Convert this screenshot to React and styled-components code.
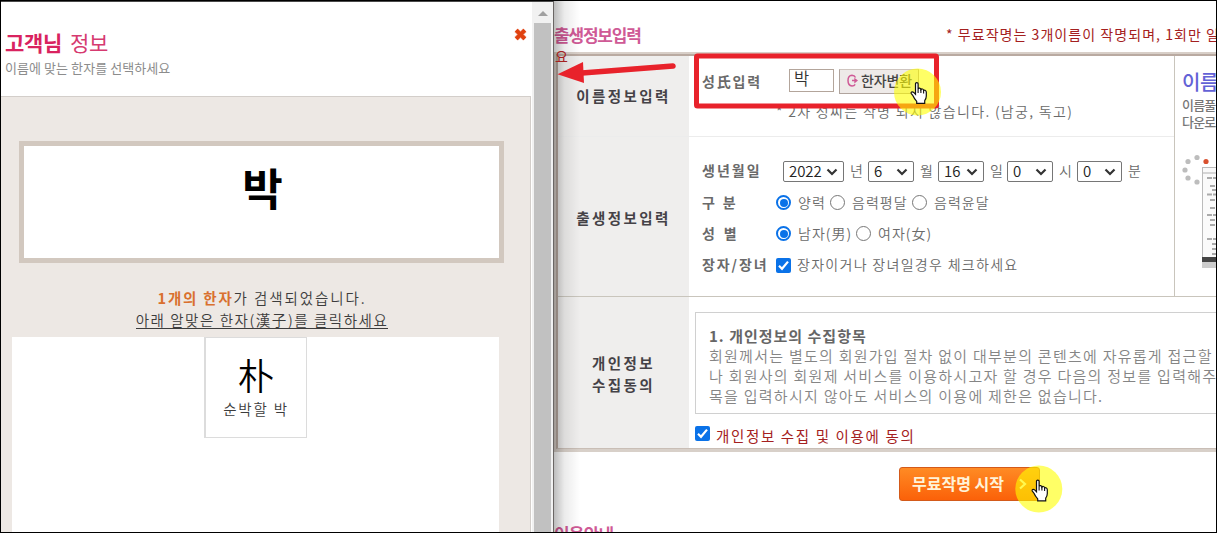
import React from 'react';
import styled, { createGlobalStyle } from 'styled-components';

const GlobalStyle = createGlobalStyle`
  * {
    box-sizing: border-box;
  }
  body {
    margin: 0;
    overflow: hidden;
    font-family: 'Noto Sans CJK KR', 'Liberation Sans', sans-serif;
    font-size: 14px;
    color: #6a6a6a;
  }
  p, h1, h2, h3 {
    margin: 0;
  }
`;

const Screen = styled.div`
  position: relative;
  display: flex;
  width: 1217px;
  height: 533px;
  overflow: hidden;
  border: 1px solid #000;
  background: #fff;
`;

const Line = styled.span`
  display: block;
  flex: none;
  width: ${p => (p.$w ? `${p.$w}px` : 'auto')};
  margin-bottom: ${p => (p.$up || 0) * 2}px;
  padding-top: ${p => p.$top || 0}px;
  font-size: ${p => p.$size || 14}px;
  font-weight: ${p => p.$weight || 350};
  letter-spacing: ${p => p.$ls || 0}px;
  line-height: ${p => p.$lh || 20}px;
  color: ${p => p.$color || 'inherit'};
  white-space: pre;
`;

/* popup */
const Popup = styled.section`
  display: flex;
  flex: none;
  width: 553px;
  height: 531px;
  border-top: 1px solid #4a4a4a;
  border-right: 1px solid #6a6664;
`;

const PopupPage = styled.div`
  display: flex;
  flex-direction: column;
  width: 531px;
`;

const PopupHeader = styled.header`
  display: flex;
  justify-content: space-between;
  height: 94px;
  padding: 26px 5px 0 4px;
`;

const PopupTitle = styled.h1`
  display: flex;
  gap: 8px;
  height: 30px;
`;

const CloseIcon = styled.svg`
  width: 13px;
  height: 13px;
`;

const PopupBody = styled.div`
  display: flex;
  flex-direction: column;
  flex: 1;
  width: 530px;
  padding-top: 44px;
  border-top: 1px solid #d3ceca;
  border-right: 1px solid #d3ceca;
  background: #ede8e4;
`;

const NameBox = styled.div`
  display: flex;
  flex: none;
  justify-content: center;
  width: 485px;
  height: 122px;
  margin-left: 18px;
  padding: 6px 0 0 2px;
  border: 5px solid #d2c8bf;
  background: #fff;
`;

const Result = styled.div`
  display: flex;
  flex-direction: column;
  align-items: center;
  width: 522px;
  height: 74px;
  padding-top: 25px;
  color: #3c3c3c;
`;

const ResultRow = styled.div`
  display: flex;
  height: 22px;
  border-bottom: ${p => (p.$underline ? '1px solid #3c3c3c' : '0')};
  ${p => p.$underline && 'height: 19px;'}
`;

const HanjaList = styled.div`
  display: flex;
  flex: 1;
  justify-content: center;
  width: 487px;
  margin-left: 11px;
  background: #fff;
`;

const HanjaCell = styled.div`
  display: flex;
  flex-direction: column;
  align-items: center;
  width: 103px;
  height: 101px;
  padding-top: 12px;
  border: 1px solid #dcdcdc;
  border-left-width: 2px;
  color: #3c3c3c;
`;

const Scrollbar = styled.div`
  display: flex;
  flex-direction: column;
  align-items: center;
  width: 21px;
  padding-top: 9px;
  background: #f1f1f1;
`;

const ScrollArrow = styled.div`
  border: 5px solid transparent;
  border-top: 0;
  border-bottom-color: #a0a0a0;
`;

const ScrollThumb = styled.div`
  flex: 1;
  width: 17px;
  margin-top: 7px;
  background: #c1c1c1;
`;

/* form page */
const Page = styled.main`
  position: relative;
  display: flex;
  flex-direction: column;
  flex: none;
  width: 662px;
  height: 531px;
  overflow: hidden;
`;

const PageHeader = styled.header`
  display: flex;
  flex: none;
  justify-content: space-between;
  height: 51px;
`;

const Table = styled.div`
  flex: none;
  width: 720px;
  height: 400px;
  border: 2px solid #d8cfc8;
  border-bottom: 3px solid #d8d0c9;
`;

const TableInner = styled.div`
  height: 395px;
  border: 2px solid #b9aaa1;
  border-bottom: 1px solid #c9beb6;
`;

const Columns = styled.div`
  display: flex;
  height: 241px;
  border-bottom: 1px solid #c9c5bc;
`;

const Rows = styled.div`
  width: 617px;
  border-right: 1px solid #c9c5bc;
`;

const Row = styled.div`
  display: flex;
  height: ${p => p.$h}px;
  border-bottom: ${p => (p.$divider ? '1px solid #ececec' : '0')};
`;

const RowTitle = styled.h3`
  display: flex;
  flex: none;
  flex-direction: column;
  justify-content: center;
  align-items: center;
  width: 131px;
  padding-top: ${p => p.$top || 0}px;
  background: #efeeed;
  color: #454247;
`;

const Fields = styled.div`
  display: flex;
  flex-direction: column;
  flex: 1;
  padding: ${p => p.$pad};
`;

const Field = styled.div`
  display: flex;
  align-items: center;
  height: ${p => p.$h || 31}px;
`;

const NameInput = styled.div`
  width: 45px;
  height: 23px;
  margin-bottom: 2px;
  padding-left: 4px;
  border: 1px solid #b3a59b;
  color: #333;
`;

const ConvertButton = styled.div`
  display: flex;
  align-items: center;
  width: 80px;
  height: 25px;
  margin-left: 5px;
  padding-left: 6px;
  border: 1px solid #b0a49d;
  border-top-color: #cfc5bf;
  background: #eeeae8;
`;

const SelectBox = styled.div`
  display: flex;
  flex: none;
  align-items: center;
  justify-content: space-between;
  width: ${p => p.$w}px;
  height: 21px;
  margin-right: 6px;
  padding: 0 5px;
  border: 1px solid #767676;
  border-radius: 2px;
  color: #222;
`;

const Radio = styled.span`
  flex: none;
  width: 15px;
  height: 15px;
  margin-right: 7px;
  border: ${p => (p.$on ? '2px solid #0a72e8' : '1.5px solid #777')};
  border-radius: 50%;
  background: ${p => (p.$on ? '#0a72e8' : '#fff')};
  background-clip: content-box;
  padding: ${p => (p.$on ? '1.5px' : '0')};
`;

const Check = styled.svg`
  flex: none;
  width: 15px;
  height: 15px;
  margin: ${p => p.$top || 2}px 6px 0 0;
`;

const Side = styled.aside`
  display: flex;
  flex-direction: column;
  padding: 13px 0 0 7px;
`;

const Terms = styled.div`
  flex: none;
  width: 560px;
  height: 102px;
  padding: 13px 13px 0;
  border: 1px solid #d0d0d0;
`;

const StartButton = styled.div`
  display: flex;
  flex: none;
  align-items: center;
  width: 141px;
  height: 34px;
  margin: 15px 0 0 345px;
  padding-left: 12px;
  border: 1px solid #d35a1a;
  border-radius: 3px;
  background: linear-gradient(#ff8b24, #fb6109);
`;

const Footer = styled.footer`
  padding-top: 18px;
`;

const Shadow = styled.div`
  position: absolute;
  top: 0;
  left: 0;
  width: 26px;
  height: 531px;
  background: linear-gradient(90deg, rgba(0, 0, 0, 0.26), rgba(0, 0, 0, 0.08) 40%, transparent);
`;

const WrappedChar = styled.div`
  position: absolute;
  top: 45px;
  left: 1px;
`;

/* marks drawn over the page */
const Marks = styled.svg`
  position: absolute;
  top: -1px;
  left: -1px;
  width: 1217px;
  height: 533px;
`;

const Chevron = () => (
  <svg width="12" height="8" viewBox="0 0 12 8">
    <path d="M1.5 1.5 L6 6 L10.5 1.5" fill="none" stroke="#333" strokeWidth="2.2" />
  </svg>
);

const Select = ({ value, w }) => (
  <SelectBox $w={w}>
    <Line $size={15} $up={1} $ls={-0.1}>{value}</Line>
    <Chevron />
  </SelectBox>
);

const Checkbox = ({ top }) => (
  <Check $top={top} viewBox="0 0 15 15">
    <rect width="15" height="15" rx="2" fill="#0a72e8" />
    <path d="M3 7.8 L6 10.8 L12 3.6" fill="none" stroke="#fff" strokeWidth="2.2" />
  </Check>
);

const Hand = ({ x, y }) => (
  <g transform={`translate(${x} ${y})`}>
    <path
      d="M5 1.8 Q5 .6 6.3 .6 Q7.6 .6 7.6 1.8 V7 Q8 6 9.2 6.2 Q10.3 6.4 10.4 7.6 Q11 6.7 12 7 Q13.1 7.3 13.1 8.6 Q14 7.9 14.9 8.5 Q15.8 9 15.8 10.2 V14 Q15.8 16.5 14.2 18.6 V21.4 H6.2 V19.4 Q3.6 16.5 2.5 13.8 Q1.6 12.4 .8 11.6 Q.2 10.6 1.1 10 Q2.2 9.4 3.4 10.6 L5 12.2 Z"
      fill="#fff"
      stroke="#111"
      strokeWidth="1.2"
    />
    <path d="M7.6 7 V11 M10.4 7.6 V11 M13.1 8.6 V11.4" stroke="#111" strokeWidth="1.1" />
  </g>
);

const selects = [
  { value: '2022', w: 61, unit: '년', unitW: 18 },
  { value: '6', w: 46, unit: '월', unitW: 18 },
  { value: '16', w: 46, unit: '일', unitW: 17 },
  { value: '0', w: 46, unit: '시', unitW: 18 },
  { value: '0', w: 45, unit: '분', unitW: 18 }
];

const terms = [
  '회원께서는 별도의 회원가입 절차 없이 대부분의 콘텐츠에 자유롭게 접근할 수',
  '나 회원사의 회원제 서비스를 이용하시고자 할 경우 다음의 정보를 입력해주셔야',
  '목을 입력하시지 않아도 서비스의 이용에 제한은 없습니다.'
];

const SearchPopup = () => (
  <Popup>
    <PopupPage>
      <PopupHeader>
        <div>
          <PopupTitle>
            <Line $size={21} $weight={700} $lh={28} $ls={-0.3} $color="#d9235f">고객님</Line>
            <Line $size={21} $weight={400} $lh={28} $ls={-0.3} $color="#d63a70">정보</Line>
          </PopupTitle>
          <Line $size={13} $weight={400} $ls={0.07} $color="#8c8c8c">이름에 맞는 한자를 선택하세요</Line>
        </div>
        <CloseIcon viewBox="0 0 12 12">
          <path d="M2 2 L10 10 M10 2 L2 10" stroke="#f0a08a" strokeWidth="4.6" />
          <path d="M2 2 L10 10 M10 2 L2 10" stroke="#e0410f" strokeWidth="3.4" />
        </CloseIcon>
      </PopupHeader>
      <PopupBody>
        <NameBox>
          <Line $size={44} $weight={700} $lh={70} $color="#000">박</Line>
        </NameBox>
        <Result>
          <ResultRow>
            <Line $size={14.5} $weight={700} $ls={1.8} $color="#d9702f">1개의 한자</Line>
            <Line $size={14.5} $ls={1.9}>가 검색되었습니다.</Line>
          </ResultRow>
          <ResultRow $underline>
            <Line $size={14.5} $ls={1.55}>아래 알맞은 한자(漢子)를 클릭하세요</Line>
          </ResultRow>
        </Result>
        <HanjaList>
          <HanjaCell>
            <Line $size={36} $weight={350} $lh={49} $color="#000">朴</Line>
            <Line $size={14.5} $ls={1.8}>순박할 박</Line>
          </HanjaCell>
        </HanjaList>
      </PopupBody>
    </PopupPage>
    <Scrollbar>
      <ScrollArrow />
      <ScrollThumb />
    </Scrollbar>
  </Popup>
);

const SideBanner = () => (
  <Side>
    <Line $size={20} $weight={500} $lh={26} $ls={-0.5} $color="#6362d6">이름풀이</Line>
    <Line $size={13} $weight={500} $lh={19} $ls={-0.8} $color="#777">이름풀이</Line>
    <Line $size={13} $weight={500} $lh={16} $ls={-0.8} $color="#777">다운로드</Line>
    <svg width="40" height="124" viewBox="1182 150 40 124" style={{ marginTop: 20 }}>
      {[[1197, 157.5], [1188, 161.5], [1185, 170], [1188, 178], [1197, 182]].map(([x, y]) => (
        <circle key={y} cx={x} cy={y} r="2.6" fill="#bdbdbd" />
      ))}
      <circle cx="1206" cy="161.5" r="2.6" fill="#d9512f" />
      <rect x="1202.5" y="167.5" width="30" height="100" fill="#fafafa" stroke="#bbb" />
      <path d="M1203 173 H1222" stroke="#d5d5d5" strokeWidth="2" />
      <path
        d="M1207 178 H1220 M1210 186 H1220 M1212 190 H1220 M1207 194.500 H1220 M1210 200 H1220 M1210 208 H1220 M1207 215 H1220 M1210 220 H1220 M1210 225 H1220 M1207 239 H1220 M1212 244 H1220 M1212 249 H1220 M1212 254 H1220"
        stroke="#aaa"
        strokeWidth="2"
        strokeDasharray="5 1"
      />
      <rect x="1202" y="257" width="20" height="5" fill="#444" />
      <rect x="1202" y="262" width="20" height="6" fill="#ccc" />
    </svg>
  </Side>
);

const FormPage = () => (
  <Page>
    <PageHeader>
      <Line $size={17} $weight={700} $ls={-1.2} $lh={26} $top={21} $color="#cf5a96">출생정보입력</Line>
      <Line $w={270} $ls={1.05} $weight={400} $lh={26} $top={20} $color="#a42020">
        * 무료작명는 3개이름이 작명되며, 1회만 일
      </Line>
    </PageHeader>
    <Table>
      <TableInner>
        <Columns>
          <Rows>
            <Row $h={81} $divider>
              <RowTitle>
                <Line $size={14.5} $weight={700} $ls={2.4}>이름정보입력</Line>
              </RowTitle>
              <Fields $pad="10px 0 0 13px">
                <Field $h={30}>
                  <Line $w={87} $up={0.5} $weight={700} $ls={1.8}>성氏입력</Line>
                  <NameInput>
                    <Line $size={16.5} $lh={17}>박</Line>
                  </NameInput>
                  <ConvertButton>
                    <svg width="13" height="14" viewBox="0 0 13 14">
                      <path d="M9.500 3.500 Q8.500 1.300 6 1.300 Q2 1.600 2 6.500 Q2 11.500 6 12 Q8.200 12 9.200 10.300" fill="none" stroke="#cf5a96" strokeWidth="1.500" />
                      <path d="M6 6.500 H9" stroke="#cf5a96" strokeWidth="1.500" />
                      <path d="M8.300 3.800 L12 6.600 L8.300 9.400 Z" fill="#cf5a96" />
                    </svg>
                    <Line $weight={500} $up={1.5} $ls={-0.1} $color="#444" style={{ marginLeft: 2 }}>한자변환</Line>
                  </ConvertButton>
                </Field>
                <Line $ls={1.32} style={{ marginLeft: 74, marginTop: 5 }}>* 2자 성씨는 작명 되지 않습니다. (남궁, 독고)</Line>
              </Fields>
            </Row>
            <Row $h={159}>
              <RowTitle $top={2}>
                <Line $size={14.5} $weight={700} $ls={2.4}>출생정보입력</Line>
              </RowTitle>
              <Fields $pad="19px 0 0 13px">
                <Field>
                  <Line $w={81} $up={1.5} $weight={700} $ls={2}>생년월일</Line>
                  {selects.map((item, i) => (
                    <React.Fragment key={i}>
                      <Select value={item.value} w={item.w} />
                      <Line $w={item.unitW} $up={2}>{item.unit}</Line>
                    </React.Fragment>
                  ))}
                </Field>
                <Field>
                  <Line $w={74} $up={1} $weight={700} $ls={2.4}>구 분</Line>
                  <Radio $on />
                  <Line $w={32} $up={1} $ls={1}>양력</Line>
                  <Radio />
                  <Line $w={60} $up={1} $ls={1}>음력평달</Line>
                  <Radio />
                  <Line $up={1} $ls={1}>음력윤달</Line>
                </Field>
                <Field>
                  <Line $w={74} $up={1} $weight={700} $ls={2.8}>성 별</Line>
                  <Radio $on />
                  <Line $w={58} $up={1} $ls={1}>남자(男)</Line>
                  <Radio />
                  <Line $up={1} $ls={1}>여자(女)</Line>
                </Field>
                <Field>
                  <Line $w={74} $up={1} $weight={700} $ls={1.9}>장자/장녀</Line>
                  <Checkbox />
                  <Line $up={1} $ls={1.3}>장자이거나 장녀일경우 체크하세요</Line>
                </Field>
              </Fields>
            </Row>
          </Rows>
          <SideBanner />
        </Columns>
        <Row $h={151}>
          <RowTitle $top={2}>
            <Line $size={14.5} $weight={700} $ls={2.4} $lh={22}>개인정보</Line>
            <Line $size={14.5} $weight={700} $ls={2.4} $lh={22}>수집동의</Line>
          </RowTitle>
          <Fields $pad="15px 0 0 6px">
            <Terms>
              <Line $size={15} $weight={700} $ls={1} $color="#666">1. 개인정보의 수집항목</Line>
              {terms.map(text => (
                <Line key={text} $size={15} $ls={1.26} $color="#858585">{text}</Line>
              ))}
            </Terms>
            <Field $h={43}>
              <Checkbox top={5} />
              <Line $size={14.5} $weight={400} $ls={1.65} $top={10} $color="#a42020">개인정보 수집 및 이용에 동의</Line>
            </Field>
          </Fields>
        </Row>
      </TableInner>
    </Table>
    <StartButton>
      <Line $size={16} $weight={700} $up={1} $ls={0} $color="#fff3d8">무료작명 시작</Line>
      <svg width="10" height="12" viewBox="0 0 10 12" style={{ marginLeft: 14 }}>
        <path d="M2 1.500 L7 6 L2 10.500" fill="none" stroke="#fff0c8" strokeWidth="2.200" />
      </svg>
    </StartButton>
    <Footer>
      <Line $size={17} $weight={700} $ls={-0.8} $lh={30} $color="#cf5a96">이용안내</Line>
    </Footer>
    <Shadow />
    <WrappedChar>
      <Line $weight={400} $color="#a42020">요</Line>
    </WrappedChar>
  </Page>
);

const App = () => (
  <>
    <GlobalStyle />
    <Screen>
      <SearchPopup />
      <FormPage />
      <Marks viewBox="0 0 1217 533">
        <rect x="696.500" y="56" width="240" height="50" rx="1" fill="none" stroke="#e8222b" strokeWidth="5" />
        <path d="M582 73 L673 66" stroke="#e8222b" strokeWidth="5.500" strokeLinecap="round" />
        <path d="M557.500 74.300 L583 62 L584 83 Z" fill="#e8222b" />
        <circle cx="917.500" cy="92" r="23.500" fill="#ffff00" fillOpacity="0.600" />
        <circle cx="1038.800" cy="489" r="23.500" fill="#ffff00" fillOpacity="0.600" />
        <Hand x={910.5} y={82} />
        <Hand x={1031.5} y={479.5} />
      </Marks>
    </Screen>
  </>
);

export default App;
